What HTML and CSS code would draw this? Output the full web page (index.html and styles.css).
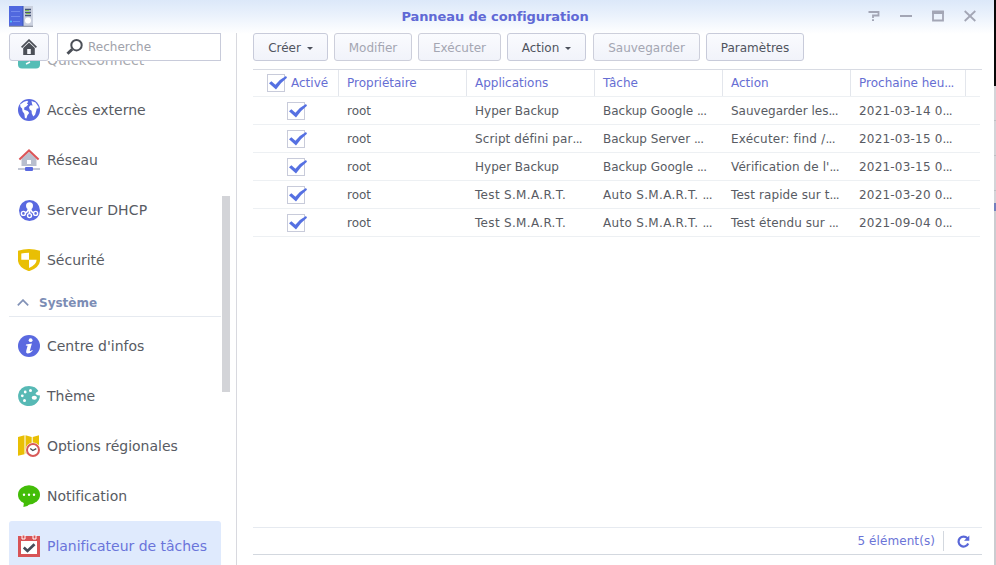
FILE: index.html
```html
<!DOCTYPE html>
<html lang="fr">
<head>
<meta charset="utf-8">
<title>Panneau de configuration</title>
<link rel="stylesheet" href="styles.css">
</head>
<body>
<svg class="defs" width="0" height="0" aria-hidden="true">
  <symbol id="check" viewBox="0 0 20 18">
    <rect x=".5" y=".5" width="17" height="17" fill="#fff" stroke="#c8cbda"/>
    <path d="M2 9.3 4.4 7.2 8.4 10.8Q13 5 19 2L20 3.8Q13.6 8.6 9 15.6Z" fill="#5570e2"/>
  </symbol>
</svg>
<div class="window">
  <header class="titlebar">
    <svg class="app-icon" width="25" height="21" viewBox="0 0 25 21">
      <rect x="0" y="0" width="14" height="20" fill="#5068df"/><rect x="14" y="0" width="10" height="20" fill="#cbd1df"/>
      <path d="M0 20.3h24" stroke="#818797"/><path d="M14 0v20" stroke="#3654b5"/>
      <path d="M2 5.5h9M2 10.5h9M4 15.5h7" stroke="#8399f2" stroke-width=".7"/><circle cx="2" cy="15.5" r="1" fill="#52caff"/>
      <path d="M16 3.5h6M16 6.5h6M16 9.5h6" stroke="#465575" stroke-width="1.6"/><path d="M16 4.5h4M17 7.5h4" stroke="#86c34b"/>
      <circle cx="19" cy="14.5" r="3" fill="#fff"/>
    </svg>
    <h1>Panneau de configuration</h1>
    <div class="controls">
      <svg width="12" height="12" viewBox="0 0 12 12"><path d="M.5 2H10.5V5.5H5V8" fill="none" stroke="#a3a6b5" stroke-width="1.8"/><path d="M4 9.2h2v1.8h-2z" fill="#a3a6b5"/></svg>
      <svg width="12" height="12" viewBox="0 0 12 12"><path d="M0 6h12" stroke="#a3a6b5" stroke-width="2"/></svg>
      <svg width="12" height="12" viewBox="0 0 12 12"><path d="M1 1.5h10v9H1z" fill="none" stroke="#a3a6b5" stroke-width="1.8"/><path d="M0 2.5h12" stroke="#a3a6b5" stroke-width="3"/></svg>
      <svg width="12" height="12" viewBox="0 0 12 12"><path d="M.7 1 11.3 11M11.3 1 .7 11" stroke="#a3a6b5" stroke-width="1.8"/></svg>
    </div>
  </header>
  <div class="main">
    <aside class="sidebar">
      <div class="search-row">
        <button class="home" aria-label="Accueil"><svg width="16" height="16" viewBox="0 0 16 16"><path d="M.6 8.3 8 1.2l7.4 7.1" fill="none" stroke="#4b4f57" stroke-width="1.8"/><path d="M2.2 9 8 3.6 13.8 9v7H2.2Z" fill="#4b4f57"/><path d="M6.2 10h3.6v5H6.2z" fill="#f5f7fc"/></svg></button>
        <div class="search"><svg width="17" height="16" viewBox="0 0 17 16"><circle cx="10.5" cy="6.2" r="5.2" fill="none" stroke="#4b4f57" stroke-width="2"/><path d="M6.2 10.2 1.5 14.8" stroke="#4b4f57" stroke-width="3"/></svg><span>Recherche</span></div>
      </div>
      <nav class="menu">
        <a class="item first"><svg viewBox="0 0 22 22"><rect y="2" width="22" height="17.5" rx="4" fill="#55bdb6"/><path d="m8 15 4-2" fill="none" stroke="#fff" stroke-width="1.5"/></svg><span class="faded">QuickConnect</span></a>
        <a class="item"><svg viewBox="0 0 22 22"><circle cx="11" cy="11" r="11" fill="#5a69e0"/><path d="M2.1 5.5 6 2.7l3.3-.9 1 1.2-1.5 1.2 1.4 1.3-1.9 2-2 1-.1 2.2 3.6 1.4 1.4 2-1.8 2.1-1 3.4-1.5-.6-.6-4.3-1.8-2.5-.4-2.6-1.6-1.7ZM13.5 2l4.1 1.6 3 4.4-.2 1.6-1.6-.2-.6 2.5-1.1 3.8-1.8 1.7-1.5-3-.2-2.7-1.9-1.2-.7-2.4 1.5-1.8 2.1.1-.6-1.7Z" fill="#fff"/></svg><span>Accès externe</span></a>
        <a class="item"><svg viewBox="0 0 22 22"><path d="M3.5 9.7 11 3l7.5 6.7V17h-15Z" fill="#b9bfce"/><path d="M9 11h4v4H9z" fill="#fff"/><path d="M1.4 10.5 11 1.4l9.6 9.1" fill="none" stroke="#dc5558" stroke-width="2"/><path d="M0 20h22" stroke="#b9bfce" stroke-width="1.7"/><rect x="7" y="18" width="8" height="4" rx="1" fill="#5a69e0"/></svg><span>Réseau</span></a>
        <a class="item"><svg viewBox="0 0 22 22"><circle cx="11.5" cy="11.5" r="10.5" fill="#5a69e0"/><circle cx="11.5" cy="6.8" r="3.5" fill="#fff"/><path d="M11.5 8v7M10.5 9q-.3 4.5-4 5M12.5 9q.3 4.5 4 5" fill="none" stroke="#fff" stroke-width="1.7"/><g fill="#5a69e0" stroke="#fff" stroke-width="1.4"><circle cx="5.4" cy="14.4" r="2"/><circle cx="11.5" cy="16.6" r="2"/><circle cx="17.6" cy="14.4" r="2"/></g></svg><span class="dhcp">Serveur DHCP</span></a>
        <a class="item"><svg viewBox="0 0 22 22"><path d="M0 1.8Q11-1.6 22 1.8V12Q21 19 11 22.2 1 19 0 12Z" fill="#e9bf04"/><path d="M11 3.7q-4.4 0-7.7.8v6.2H11zM11 10.7h7.6Q18.5 16 11 18.9z" fill="#fff"/></svg><span>Sécurité</span></a>
        <div class="group"><svg width="12" height="7" viewBox="0 0 12 7"><path d="m.8 6.3 5.2-5.2 5.2 5.2" fill="none" stroke="#8292b7" stroke-width="1.7"/></svg><span>Système</span></div>
        <a class="item"><svg viewBox="0 0 22 22"><circle cx="11" cy="11" r="11" fill="#5a69e0"/><circle cx="12.6" cy="5.2" r="1.9" fill="#fff"/><path d="M8 9.4Q11 9 13.9 8.5L11.8 16q.8.3 2.4-1l.5.8Q12 18.7 9.5 18.6 7.6 18.4 8.2 16L9.6 10.8 7.8 10.5Z" fill="#fff"/></svg><span>Centre d'infos</span></a>
        <a class="item"><svg viewBox="0 0 22 22"><path d="M11 1Q2 1.2.2 9.4-.8 18 7 20.5q9 2.2 13.6-5 1.3-2.2 1.4-5-2.5 0-4.6-1.5.2-1.5 3-2.9Q17.8 1.2 11 1Z" fill="#57b9b5"/><g fill="#fff"><circle cx="4.3" cy="10.8" r="1.4"/><circle cx="7.2" cy="7" r="1.4"/><circle cx="12.5" cy="5.4" r="1.5"/><circle cx="6.5" cy="15.5" r="1.5"/><ellipse cx="16.3" cy="12.7" rx="2.6" ry="2"/></g></svg><span>Thème</span></a>
        <a class="item"><svg viewBox="0 0 22 22"><path d="m0 2 6.5-1.8v19L0 20.8ZM7.5.2l6.2 1.8v17l-6.2-.6ZM14.7 2 21 .2V10h-6.3z" fill="#e9bf04"/><circle cx="15" cy="15" r="7.5" fill="#fff"/><circle cx="15" cy="15" r="6" fill="#fff" stroke="#d85a58" stroke-width="2"/><path d="m12.3 13.5 2.5 2 3.5-1.9" fill="none" stroke="#4b4f57" stroke-width="1.4"/></svg><span>Options régionales</span></a>
        <a class="item"><svg viewBox="0 0 22 22"><ellipse cx="11" cy="9.8" rx="11" ry="9.6" fill="#43bd08"/><path d="M6 16.5 5.4 22q5-.8 7.6-4Z" fill="#43bd08"/><g fill="#fff"><circle cx="6" cy="9.7" r="1.2"/><circle cx="11" cy="9.7" r="1.2"/><circle cx="16" cy="9.7" r="1.2"/></g></svg><span>Notification</span></a>
        <a class="item active"><svg viewBox="0 0 22 22"><path d="M0 1h22v21H0Z" fill="#d85356"/><path d="M3 6h16v13H3Z" fill="#fff"/><path d="M4 0h3v4H4zM15 0h3v4h-3z" fill="#d85356" stroke="#fff"/><path d="m5.8 12.6 3.7 3.4 7-6.8" fill="none" stroke="#464c5a" stroke-width="2.7"/></svg><span>Planificateur de tâches</span></a>
      </nav>
      <div class="scrollbar"></div>
    </aside>
    <section class="content">
      <div class="toolbar">
        <button class="b1">Créer<i></i></button><button class="b2" disabled>Modifier</button><button class="b3" disabled>Exécuter</button><button class="b4">Action<i></i></button><button class="b5" disabled>Sauvegarder</button><button class="b6">Paramètres</button>
      </div>
      <div class="table">
        <div class="row head"><div class="enable"><svg class="check"><use href="#check"/></svg><span>Activé</span></div><div>Propriétaire</div><div>Applications</div><div>Tâche</div><div>Action</div><div>Prochaine heu<b>...</b></div><div></div></div>
        <div class="row"><div class="enable"><svg class="check"><use href="#check"/></svg></div><div>root</div><div>Hyper Backup</div><div>Backup Google <b>...</b></div><div>Sauvegarder les<b>...</b></div><div class="date">2021-03-14 0<b>...</b></div></div>
        <div class="row"><div class="enable"><svg class="check"><use href="#check"/></svg></div><div>root</div><div class="loose">Script défini par<b>...</b></div><div>Backup Server <b>...</b></div><div class="date">Exécuter: find /<b>...</b></div><div class="date">2021-03-15 0<b>...</b></div></div>
        <div class="row"><div class="enable"><svg class="check"><use href="#check"/></svg></div><div>root</div><div>Hyper Backup</div><div>Backup Google <b>...</b></div><div class="loose">Vérification de l'<b>...</b></div><div class="date">2021-03-15 0<b>...</b></div></div>
        <div class="row"><div class="enable"><svg class="check"><use href="#check"/></svg></div><div>root</div><div class="smart">Test S.M.A.R.T.</div><div class="smart">Auto S.M.A.R.T. <b>...</b></div><div class="loose">Test rapide sur t<b>...</b></div><div class="date">2021-03-20 0<b>...</b></div></div>
        <div class="row"><div class="enable"><svg class="check"><use href="#check"/></svg></div><div>root</div><div class="smart">Test S.M.A.R.T.</div><div class="smart">Auto S.M.A.R.T. <b>...</b></div><div class="loose">Test étendu sur <b>...</b></div><div class="date">2021-09-04 0<b>...</b></div></div>
      </div>
      <footer class="status"><span>5 élément(s)</span><button class="refresh" aria-label="Actualiser"><svg width="13" height="13" viewBox="0 0 13 13"><path d="M10.4 3.3A5 5 0 1 0 11.2 8.5" fill="none" stroke="#5967d8" stroke-width="2.2"/><path d="M12.3.5v5.3H7Z" fill="#5967d8"/></svg></button></footer>
    </section>
  </div>
</div>
<div class="desktop"><div class="dark"></div><div class="panel"></div><div class="mark"></div><div class="panel rest"></div></div>
</body>
</html>
```
FILE: styles.css
```css
* { box-sizing: border-box; }
body { margin: 0; width: 996px; height: 565px; overflow: hidden; display: flex; background: #fff; font: 12px "DejaVu Sans", sans-serif; color: #585b63; }
.defs { position: absolute; }
.window { width: 994px; height: 565px; display: flex; flex-direction: column; background: linear-gradient(#dce8f9 0, #e9f1fc 14px, #fff 34px); }
.titlebar { height: 33px; display: grid; grid-template-columns: 120px 1fr 120px; align-items: center; padding: 0 18px 0 9px; flex: none; }
.app-icon { margin-top: -1px; }
h1 { margin: 0; padding-left: 5px; font-size: 13px; line-height: 33px; text-align: center; color: #6069d5; letter-spacing: -.08px; white-space: nowrap; }
.controls { display: flex; gap: 20px; justify-content: flex-end; margin-top: -2px; }
.main { display: flex; flex: 1; min-height: 0; }
.sidebar { width: 237px; border-right: 1px solid #d8d9df; display: grid; grid-template: 28px 1fr / 212px 10px; padding-left: 9px; flex: none; }
.search-row { grid-column: 1 / 3; display: flex; gap: 8px; }
button { font: inherit; color: #50545e; border: 1px solid #c8cbda; border-radius: 3px; background: linear-gradient(#fafbfe, #f1f3fa); padding: 0; display: flex; align-items: center; justify-content: center; }
.home { width: 40px; height: 28px; }
.search { width: 164px; height: 28px; border: 1px solid #c8cbda; background: #fff; display: flex; align-items: center; padding-left: 8px; gap: 5px; color: #a0a2aa; }
.search svg { margin-top: -1px; }
.menu { overflow: hidden; min-height: 0; }
.item { height: 50px; display: flex; align-items: center; padding-left: 9px; gap: 7px; font-size: 14px; white-space: nowrap; letter-spacing: -.02px; }
.item svg { width: 22px; height: 22px; flex: none; }
.dhcp { letter-spacing: .12px; }
.first { margin-top: -26px; }
.faded { color: #a7a9ae; }
.group { height: 32px; border-bottom: 1px solid #e6eaf0; margin-bottom: 4px; padding: 4px 0 0 8px; display: flex; align-items: center; gap: 10px; color: #7c8db5; font-weight: bold; }
.active { background: #dfeafd; border-radius: 3px; color: #6a74da; }
.scrollbar { width: 8px; height: 196px; margin: 135px 0 0 1px; background: #d3d4d8; }
.content { flex: 1; min-width: 0; padding: 0 12px 10px 16px; display: flex; flex-direction: column; }
.toolbar { display: flex; height: 36px; gap: 6px; }
.toolbar button { height: 28px; padding-top: 1px; }
.toolbar button:disabled { color: #a4a6b2; border-color: #cdcfdb; }
.toolbar i { border: 3.5px solid transparent; border-top-color: #4c505b; border-bottom: 0; margin: 2px 0 0 6px; }
.b1 { width: 75px; } .b2 { width: 78px; } .b3 { width: 83px; } .b4 { width: 79px; margin-right: 1px; } .b5 { width: 107px; } .b6 { width: 98px; }
.table { flex: 1; border-top: 1px solid #d8dbe3; }
.row { display: grid; grid-template-columns: 86px repeat(4, 128px) 115px 1fr; width: 727px; height: 28px; line-height: 29px; border-bottom: 1px solid #edf0f3; }
.row > div { padding-left: 8px; white-space: nowrap; overflow: hidden; }
.row > .enable { display: flex; align-items: center; padding-left: 34px; }
.row b { font-weight: normal; letter-spacing: -.7px; }
.loose { letter-spacing: .1px; }
.date { letter-spacing: .2px; }
.smart { letter-spacing: .32px; }
.check { width: 20px; height: 18px; flex: none; }
.head { height: 27px; line-height: 26px; color: #666ed3; }
.head > div { border-right: 1px solid #e3e6ec; }
.head > div:last-child { border-right: 0; }
.head > .enable { padding-left: 14px; gap: 4px; }
.head .check { margin-top: -1px; }
.status { height: 28px; border-top: 1px solid #e6eaf0; border-bottom: 1px solid #d3d8df; display: flex; align-items: center; justify-content: flex-end; color: #6b74d7; }
.status span { margin-right: 8px; letter-spacing: .08px; }
.refresh { border: 0; border-left: 1px solid #d3d8df; border-radius: 0; background: none; height: 20px; width: 39px; }
.desktop { width: 2px; display: flex; flex-direction: column; }
.dark { height: 86px; background: #080808; }
.panel { height: 117px; background: repeating-linear-gradient(#d4d4d8 0, #d4d4d8 34px, #a9abb0 35px); }
.mark { height: 8px; background: #7380bd; }
.rest { flex: 1; background: #cbccd0; }
```
